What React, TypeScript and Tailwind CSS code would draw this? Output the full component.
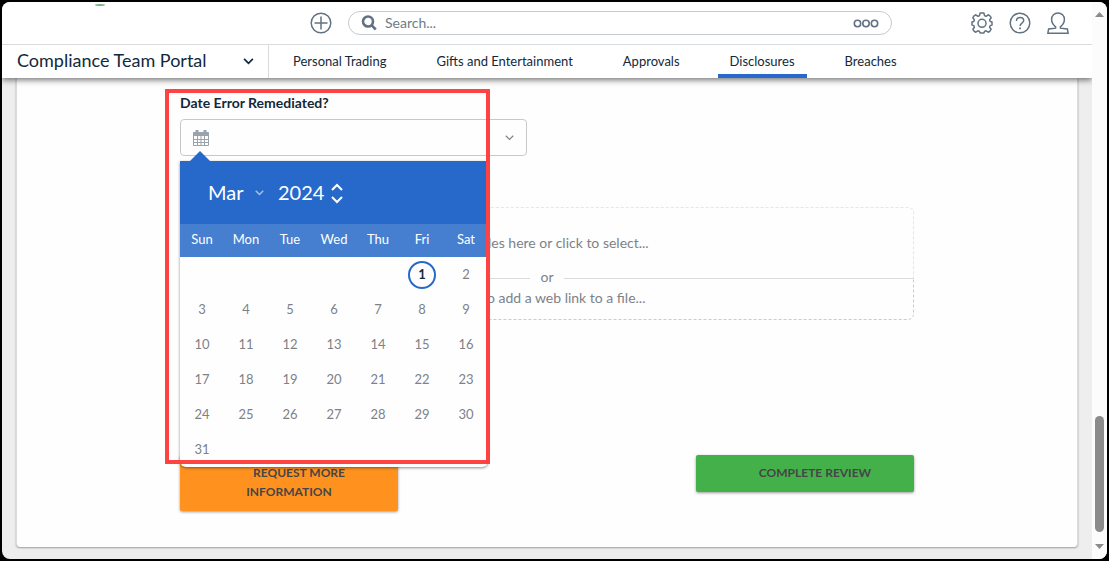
import { Fragment, useState } from 'react';
import clsx from 'clsx';

const tabs = ['Personal Trading', 'Gifts and Entertainment', 'Approvals', 'Disclosures', 'Breaches'];
const weekdays = ['Sun', 'Mon', 'Tue', 'Wed', 'Thu', 'Fri', 'Sat'];
const months = ['Jan', 'Feb', 'Mar', 'Apr', 'May', 'Jun', 'Jul', 'Aug', 'Sep', 'Oct', 'Nov', 'Dec'];

function getWeeks(year: number, month: number) {
  const offset = new Date(year, month, 1).getDay();
  const total = new Date(year, month + 1, 0).getDate();
  const rows = Math.ceil((offset + total) / 7);

  return Array.from({ length: rows }, (_, row) =>
    Array.from({ length: 7 }, (_, col) => {
      const day = row * 7 + col - offset + 1;
      return day > 0 && day <= total ? day : null;
    })
  );
}

function Chevron({ className, up = false }: { className?: string; up?: boolean }) {
  return (
    <svg viewBox="0 0 12 8" fill="none" stroke="currentColor" className={className} aria-hidden="true">
      <path d={up ? 'M1 7 6 2l5 5' : 'M1 1l5 5 5-5'} />
    </svg>
  );
}

function PlusIcon() {
  return (
    <svg viewBox="0 0 22 22" fill="none" stroke="currentColor" strokeWidth="1.5" className="size-[22px]" aria-hidden="true">
      <circle cx="11" cy="11" r="9.8" />
      <path d="M11 4.5v13M4.500 11h13" />
    </svg>
  );
}

function GearIcon() {
  return (
    <svg viewBox="0 0 22 22" fill="none" stroke="currentColor" strokeWidth="1.5" strokeLinejoin="round" className="size-[22px]" aria-hidden="true">
      <path d="M9.100 1h3.800l.6 2.600 1.500.7 2.200-1.500q2.200 1 3 3l-1.600 2.100.6 1.600 1.800.4v3.200l-1.800.5-.6 1.600 1.500 2.100q-.8 2.100-2.900 2.900l-2.200-1.400-1.500.6-.6 1.600H9.100l-.6-1.600-1.500-.6-2.200 1.400q-2.100-.8-2.900-2.900l1.500-2.100-.6-1.600L1 13.100V9.900l1.800-.4.6-1.600-1.600-2.100q.8-2 3-3L7 4.300l1.500-.7z" />
      <circle cx="11" cy="11.300" r="4" />
    </svg>
  );
}

function HelpIcon() {
  return (
    <svg viewBox="0 0 22 22" fill="none" stroke="currentColor" strokeWidth="1.5" className="size-[22px]" aria-hidden="true">
      <circle cx="11" cy="11" r="9.8" />
      <path d="M7.4 9c0-2.2 1.5-3.6 3.7-3.6 2 0 3.6 1.2 3.6 3.1 0 2.6-3.6 2.6-3.6 5.4" />
      <path d="M11 15.4v1.8" strokeWidth="1.8" />
    </svg>
  );
}

function UserIcon() {
  return (
    <svg viewBox="0 0 22 22" fill="none" stroke="currentColor" strokeWidth="1.5" className="size-[22px]" aria-hidden="true">
      <path d="M8.600 14.800C6.300 13 4.600 10 4.600 7.300 4.600 3.800 7.400 1 11 1s6.400 2.800 6.400 6.300c0 2.700-1.700 5.700-4 7.500v1.400l7 .8.700 4.200H.9l.7-4.200 7-.8z" />
    </svg>
  );
}

function CalendarIcon() {
  return (
    <svg viewBox="0 0 16 16" fill="none" stroke="currentColor" className="size-4" aria-hidden="true">
      <path d="M.5 3.500h15v12H.5zM4.500 6v9.500M8 6v9.500M11.500 6v9.500M.5 9.500h15M.5 12.500h15" />
      <path d="M.5 2.500h15v3H.5z" fill="currentColor" />
      <path d="M4 0v4M12 0v4" strokeWidth="3" />
    </svg>
  );
}

function Header() {
  return (
    <header className="relative z-10 bg-white shadow-[0_2px_6px_rgba(0,0,0,0.55)]">
      <svg viewBox="0 0 12 2" className="absolute top-0.5 left-[92px] h-0.5 w-3" aria-hidden="true">
        <ellipse cx="6" cy="1" rx="5" ry="1" fill="#7cb887" />
      </svg>
      <div className="flex h-[43px] items-center border-b border-[#d8dcde] pr-[23px] pl-[308px] text-[#627282]">
        <button aria-label="Add"><PlusIcon /></button>
        <div className="mr-[79px] ml-4 flex h-6 flex-1 items-center rounded-full border border-[#c6c9cc] px-3">
          <svg viewBox="0 0 16 16" fill="none" stroke="currentColor" strokeWidth="2.6" className="size-4 shrink-0" aria-hidden="true">
            <circle cx="7" cy="6.500" r="5" />
            <path d="M10.500 10.200l4.300 4.300" />
          </svg>
          <input aria-label="Search" placeholder="Search..." className="ml-2 min-w-0 flex-1 text-sm outline-none placeholder:text-[#6d7b88]" />
          <button aria-label="Search options">
            <svg viewBox="0 0 26 10" fill="none" stroke="currentColor" strokeWidth="1.600" className="h-[10px] w-[26px]" aria-hidden="true">
              <circle cx="4.500" cy="5.500" r="3.200" />
              <circle cx="13" cy="5.500" r="3.200" />
              <circle cx="21.500" cy="5.500" r="3.200" />
            </svg>
          </button>
        </div>
        <div className="flex gap-4">
          <button aria-label="Settings"><GearIcon /></button>
          <button aria-label="Help"><HelpIcon /></button>
          <button aria-label="Account"><UserIcon /></button>
        </div>
      </div>
      <div className="flex h-[33px] text-[#12293b]">
        <button className="flex w-[267px] items-center justify-between border-r border-[#d8dcde] pr-3.5 pl-[15px] text-lg">
          <span className="pb-1">Compliance Team Portal</span>
          <Chevron className="h-[7px] w-[11px] stroke-2" />
        </button>
        <nav className="flex gap-[26px] pl-3 text-[13px]">
          {tabs.map((tab) => (
            <a
              key={tab}
              href="#"
              className={clsx('flex items-center border-y-4 border-transparent px-3', tab === 'Disclosures' && 'border-b-[#2669cb]')}
            >
              {tab}
            </a>
          ))}
        </nav>
      </div>
    </header>
  );
}

function Calendar() {
  const [month, setMonth] = useState(2);
  const [year, setYear] = useState(2024);
  const [selected, setSelected] = useState(1);

  return (
    <div className="absolute top-[42px] left-0 z-10 w-[308px] rounded-b-md bg-[#fefefe] shadow-[0_1px_3px_rgba(0,0,0,0.45)]">
      <svg viewBox="0 0 20 10" className="absolute -top-[10px] left-[10px] h-[10px] w-5 fill-[#2669cb]" aria-hidden="true">
        <path d="M0 10 10 0l10 10z" />
      </svg>
      <div className="flex h-[63px] items-center bg-[#2669cb] pl-7 text-xl text-white">
        <div className="relative flex items-center">
          <select
            aria-label="Month"
            value={month}
            onChange={(e) => setMonth(Number(e.target.value))}
            className="w-[70px] appearance-none bg-transparent pb-0.5 outline-none"
          >
            {months.map((name, i) => (
              <option key={name} value={i} className="text-black">{name}</option>
            ))}
          </select>
          <Chevron className="pointer-events-none absolute right-[14px] h-[6px] w-[9px] stroke-2 text-[#a3c0ea]" />
        </div>
        <input
          aria-label="Year"
          value={year}
          onChange={(e) => setYear(Number(e.target.value) || 0)}
          className="w-[53px] bg-transparent pb-0.5 outline-none"
        />
        <div className="flex flex-col gap-[5px] pt-0.5">
          <button aria-label="Next year" className="block" onClick={() => setYear(year + 1)}>
            <Chevron up className="h-2 w-3 stroke-2" />
          </button>
          <button aria-label="Previous year" className="block" onClick={() => setYear(year - 1)}>
            <Chevron className="h-2 w-3 stroke-2" />
          </button>
        </div>
      </div>
      <table className="w-full table-fixed border-collapse text-center text-[13px]">
        <thead>
          <tr className="h-[33px] bg-[#467fd0] text-white">
            {weekdays.map((day) => (
              <th key={day} className="p-0 pb-0.5 font-normal">{day}</th>
            ))}
          </tr>
        </thead>
        <tbody className="text-[#7c8289]">
          {getWeeks(year, month).map((week, row) => (
            <tr key={row} className="h-[35px]">
              {week.map((day, col) => (
                <td key={col} className="p-0">
                  {day && (
                    <button
                      onClick={() => setSelected(day)}
                      className={clsx(
                        'size-7 rounded-full border-2',
                        day === selected ? 'border-[#2669cb] font-bold text-[#12293b]' : 'border-transparent'
                      )}
                    >
                      {day}
                    </button>
                  )}
                </td>
              ))}
            </tr>
          ))}
        </tbody>
      </table>
    </div>
  );
}

function DateField() {
  return (
    <div className="relative">
      <label htmlFor="remediated" className="block h-6 text-sm leading-4 font-bold text-[#12293b]">
        Date Error Remediated?
      </label>
      <div className="relative w-[347px]">
        <div className="flex h-[37px] items-center rounded-sm border border-[#c6c9cc] px-3">
          <span className="text-[#9aa3ab]"><CalendarIcon /></span>
          <input id="remediated" className="mx-2 min-w-0 flex-1 text-sm outline-none" />
          <Chevron className="h-[6px] w-[9px] stroke-[1.5] text-[#7c8289]" />
        </div>
        <Calendar />
      </div>
      {/* Callout around the date picker */}
      <div className="pointer-events-none absolute -top-[6px] -left-[15px] z-20 h-[375px] w-[325px] border-4 border-[#ff4242]" />
    </div>
  );
}

function Attachments() {
  return (
    <div className="mt-[51px] text-center text-sm text-[#7c8289]">
      <button className="block h-[71px] w-full rounded-t-md border border-b-0 border-dashed border-[#e6e6e6]">
        Drop files here or click to select...
      </button>
      <div className="flex h-0 items-center">
        <span className="h-px flex-1 bg-[#d9dbdc]" />
        <span className="px-[10px] pb-0.5 leading-4">or</span>
        <span className="h-px flex-1 bg-[#d9dbdc]" />
      </div>
      <button className="block h-[42px] w-full rounded-b-md border border-t-0 border-dashed border-[#c9cbcd] pb-0.5">
        Click to add a web link to a file...
      </button>
    </div>
  );
}

const actions = [
  { lines: ['Request more', 'information'], color: 'bg-[#ff921e]' },
  { lines: ['Complete review'], color: 'bg-[#44b04a]' },
];

function Actions() {
  return (
    <div className="mt-[135px] flex items-start justify-between">
      {actions.map(({ lines, color }) => (
        <button
          key={lines[0]}
          className={clsx('w-[218px] rounded-xs pt-2 pb-[10px] text-xs leading-[19px] font-bold text-[#464646] uppercase shadow-[0_1px_3px_rgba(0,0,0,0.4)]', color)}
        >
          {lines.map((line, i) => (
            <Fragment key={line}>
              {i === 0 ? <span className="inline-block w-5" /> : <br />}
              {line}
            </Fragment>
          ))}
        </button>
      ))}
    </div>
  );
}

function Scrollbar() {
  return (
    <div className="relative z-20 flex w-[15px] flex-col items-center bg-[#fcfcfc] py-[10px]" aria-hidden="true">
      <svg viewBox="0 0 9 5" className="h-[5px] w-[9px] fill-[#8b8b8b]"><path d="M0 5 4.500 0 9 5z" /></svg>
      <div className="flex flex-1 items-end pb-[12px]">
        <div className="h-[116px] w-[9px] rounded-full bg-[#8b8b8b]" />
      </div>
      <svg viewBox="0 0 9 5" className="h-[5px] w-[9px] fill-[#8b8b8b]"><path d="M0 0h9L4.500 5z" /></svg>
    </div>
  );
}

export default function App() {
  return (
    <div className="flex min-h-screen bg-black p-0.5 font-['Lato',sans-serif]">
      <div className="flex flex-1 overflow-hidden rounded-lg bg-[#eeeeee]">
        <div className="flex min-w-0 flex-1 flex-col">
          <Header />
          <main className="mx-[14px] mb-3 flex-1 rounded-b-sm border-x border-[#d8dcde] bg-[#fefefe] px-4 pt-[17px] pb-[35px] shadow-[0_1px_2px_rgba(0,0,0,0.35)]">
            <div className="mx-auto max-w-[734px]">
              <DateField />
              <Attachments />
              <Actions />
            </div>
          </main>
        </div>
        <Scrollbar />
      </div>
    </div>
  );
}
